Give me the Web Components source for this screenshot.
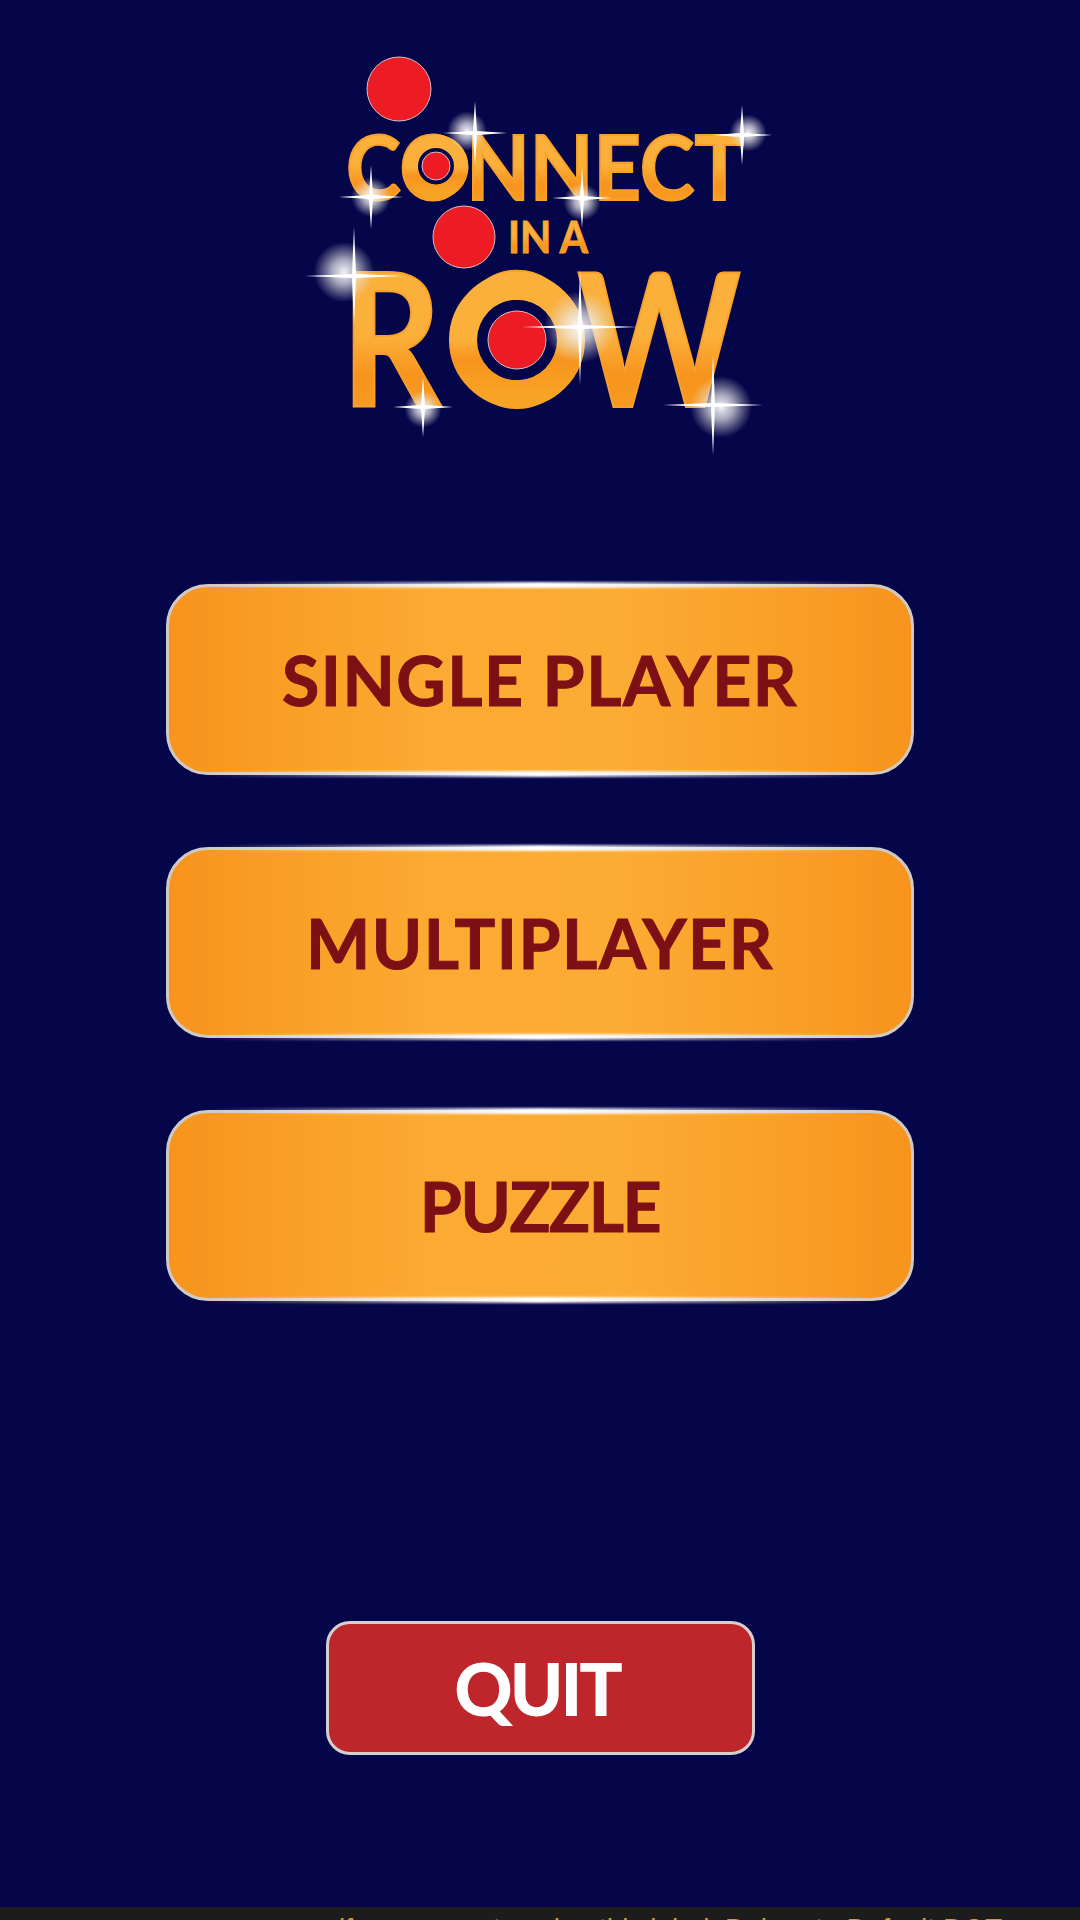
<!DOCTYPE html>
<html>
<head>
<meta charset="utf-8">
<title>Connect In A Row</title>
<style>
  html, body { margin: 0; padding: 0; background: #05054a; }
</style>
</head>
<body>
<main-menu>
  <game-logo slot="logo"></game-logo>
  <menu-button>SINGLE PLAYER</menu-button>
  <menu-button>MULTIPLAYER</menu-button>
  <menu-button style="--track: -1.5px">PUZZLE</menu-button>
  <quit-button slot="quit">QUIT</quit-button>
  <debug-bar slot="bar">if you are not seeing this label, Debug to Default DOT</debug-bar>
</main-menu>

<script>
class MainMenu extends HTMLElement {
    constructor() {
        super();
        this.attachShadow({ mode: 'open' });
        this.shadowRoot.innerHTML = `
            <style>
                :host {
                    display: flex;
                    flex-direction: column;
                    width: 1080px;
                    height: 1920px;
                    overflow: hidden;
                    background: #05054a;
                }
                .logo { height: 584px; flex: none; }
                .buttons {
                    display: flex;
                    flex-direction: column;
                    align-items: center;
                    gap: 72px;
                }
                .quit {
                    flex: none;
                    display: flex;
                    justify-content: center;
                    margin-top: 320px;
                }
                .bar { margin-top: auto; }
            </style>
            <div class="logo"><slot name="logo"></slot></div>
            <div class="buttons"><slot></slot></div>
            <div class="quit"><slot name="quit"></slot></div>
            <div class="bar"><slot name="bar"></slot></div>
        `;
    }
}

class GameLogo extends HTMLElement {
    constructor() {
        super();
        this.attachShadow({ mode: 'open' });
        // sparkle positions read off the reference: x, y, ray length, glow offset
        const sparkles = [
            [475, 133, 32, -8, -2], [742, 135, 30, 6, -2], [371, 197, 32, 0, 0], [582, 198, 30, 0, 4],
            [354, 276, 49, -10, -4], [580, 327, 58, 0, 0], [423, 407, 30, 0, 2], [713, 405, 50, 8, 2]
        ];
        const star = (x, y, s) => {
            const t = 2;
            return `${x - s},${y} ${x - t},${y - t} ${x},${y - s} ${x + t},${y - t} ${x + s},${y} ${x + t},${y + t} ${x},${y + s} ${x - t},${y + t}`;
        };
        this.shadowRoot.innerHTML = `
            <style>
                :host { display: block; width: 1080px; height: 584px; }
                svg { display: block; }
                text { font-family: "Lato", "Liberation Sans", sans-serif; font-weight: 700; fill: url(#gold); }
                .ball { fill: #ed1c24; stroke: #cfc0c8; stroke-width: 1; }
                .ring { fill: none; stroke: url(#goldRing); }
                .star { fill: #fff; filter: blur(0.7px); }
            </style>
            <svg width="1080" height="584" viewBox="0 0 1080 584">
                <defs>
                    <linearGradient id="gold" x1="0" y1="0" x2="0" y2="1">
                        <stop offset="0" stop-color="#fbb03b"/>
                        <stop offset="0.5" stop-color="#fbb03b"/>
                        <stop offset="0.68" stop-color="#f7941d"/>
                        <stop offset="1" stop-color="#f7a326"/>
                    </linearGradient>
                    <linearGradient id="goldRing" x1="0" y1="0" x2="0" y2="1">
                        <stop offset="0" stop-color="#fbb03b"/>
                        <stop offset="0.5" stop-color="#fbb03b"/>
                        <stop offset="0.68" stop-color="#f7941d"/>
                        <stop offset="1" stop-color="#f7a326"/>
                    </linearGradient>
                    <radialGradient id="glow">
                        <stop offset="0" stop-color="#fff" stop-opacity="0.95"/>
                        <stop offset="0.4" stop-color="#eee" stop-opacity="0.7"/>
                        <stop offset="1" stop-color="#ddd" stop-opacity="0"/>
                    </radialGradient>
                </defs>
                <circle class="ball" cx="399" cy="89" r="32"/>
                <text x="346" y="200" font-size="90" textLength="398" lengthAdjust="spacingAndGlyphs" stroke="#f9a02a" stroke-width="2">CONNECT</text>
                <circle class="ring" cx="436" cy="167" r="25" stroke-width="15"/>
                <circle cx="436" cy="166" r="18" fill="#05054a"/>
                <circle class="ball" cx="436" cy="166" r="14"/>
                <circle class="ball" cx="464" cy="237" r="31"/>
                <text x="508" y="253" font-size="43" textLength="80" lengthAdjust="spacingAndGlyphs" stroke="#f9a02a" stroke-width="1">IN A</text>
                <g transform="translate(352 0) scale(0.84 1)">
                    <text x="-13 121 268" y="407" font-size="186" stroke="#f9a02a" stroke-width="2">ROW</text>
                </g>
                <circle class="ring" cx="517" cy="340" r="54" stroke-width="28"/>
                <circle cx="517" cy="340" r="40" fill="#05054a"/>
                <circle class="ball" cx="517" cy="340" r="29"/>
                ${sparkles.map(([x, y, s, ox, oy]) => `
                    <circle cx="${x + ox}" cy="${y + oy}" r="${s * 0.62}" fill="url(#glow)"/>
                    <polygon class="star" points="${star(x, y, s)}"/>
                `).join('')}
            </svg>
        `;
    }
}

class MenuButton extends HTMLElement {
    constructor() {
        super();
        this.attachShadow({ mode: 'open' });
        this.shadowRoot.innerHTML = `
            <style>
                :host {
                    display: flex;
                    position: relative;
                    box-sizing: border-box;
                    width: 748px;
                    height: 191px;
                    align-items: center;
                    justify-content: center;
                    border: 3px solid #cfcac4;
                    border-radius: 42px;
                    background: linear-gradient(90deg, #f7941d 0%, #f99c23 12%, #fbaa32 35%, #fbac35 60%, #f99c23 88%, #f7941d 100%);
                    color: #7d1014;
                    font: 700 68px "Lato", "Liberation Sans", sans-serif;
                    letter-spacing: var(--track, 1.5px);
                    -webkit-text-stroke: 1px #7d1014;
                }
                .shine {
                    position: absolute;
                    left: 5%;
                    right: 5%;
                    height: 6px;
                    background: linear-gradient(90deg, rgba(255,255,255,0), #fff 50%, rgba(255,255,255,0));
                    filter: blur(1px);
                }
                .top { top: -5px; }
                .bottom { bottom: -5px; }
            </style>
            <span class="shine top"></span>
            <slot></slot>
            <span class="shine bottom"></span>
        `;
    }
}

class QuitButton extends HTMLElement {
    constructor() {
        super();
        this.attachShadow({ mode: 'open' });
        this.shadowRoot.innerHTML = `
            <style>
                :host {
                    display: flex;
                    box-sizing: border-box;
                    width: 429px;
                    height: 134px;
                    align-items: center;
                    justify-content: center;
                    border: 3px solid #d5cfcf;
                    border-radius: 24px;
                    padding-right: 6px;
                    background: #be262b;
                    color: #fff;
                    font: 900 72px "Lato", "Liberation Sans", sans-serif;
                    letter-spacing: -3px;
                }
            </style>
            <slot></slot>
        `;
    }
}

class DebugBar extends HTMLElement {
    constructor() {
        super();
        this.attachShadow({ mode: 'open' });
        this.shadowRoot.innerHTML = `
            <style>
                :host {
                    display: flex;
                    justify-content: flex-end;
                    box-sizing: border-box;
                    height: 13px;
                    overflow: hidden;
                    background: #1c1c1c;
                    color: #c9a227;
                    font: 28px/32px "Liberation Sans", sans-serif;
                    white-space: nowrap;
                    padding: 6px 78px 0 0;
                }
            </style>
            <slot></slot>
        `;
    }
}

customElements.define('main-menu', MainMenu);
customElements.define('game-logo', GameLogo);
customElements.define('menu-button', MenuButton);
customElements.define('quit-button', QuitButton);
customElements.define('debug-bar', DebugBar);
</script>
</body>
</html>
